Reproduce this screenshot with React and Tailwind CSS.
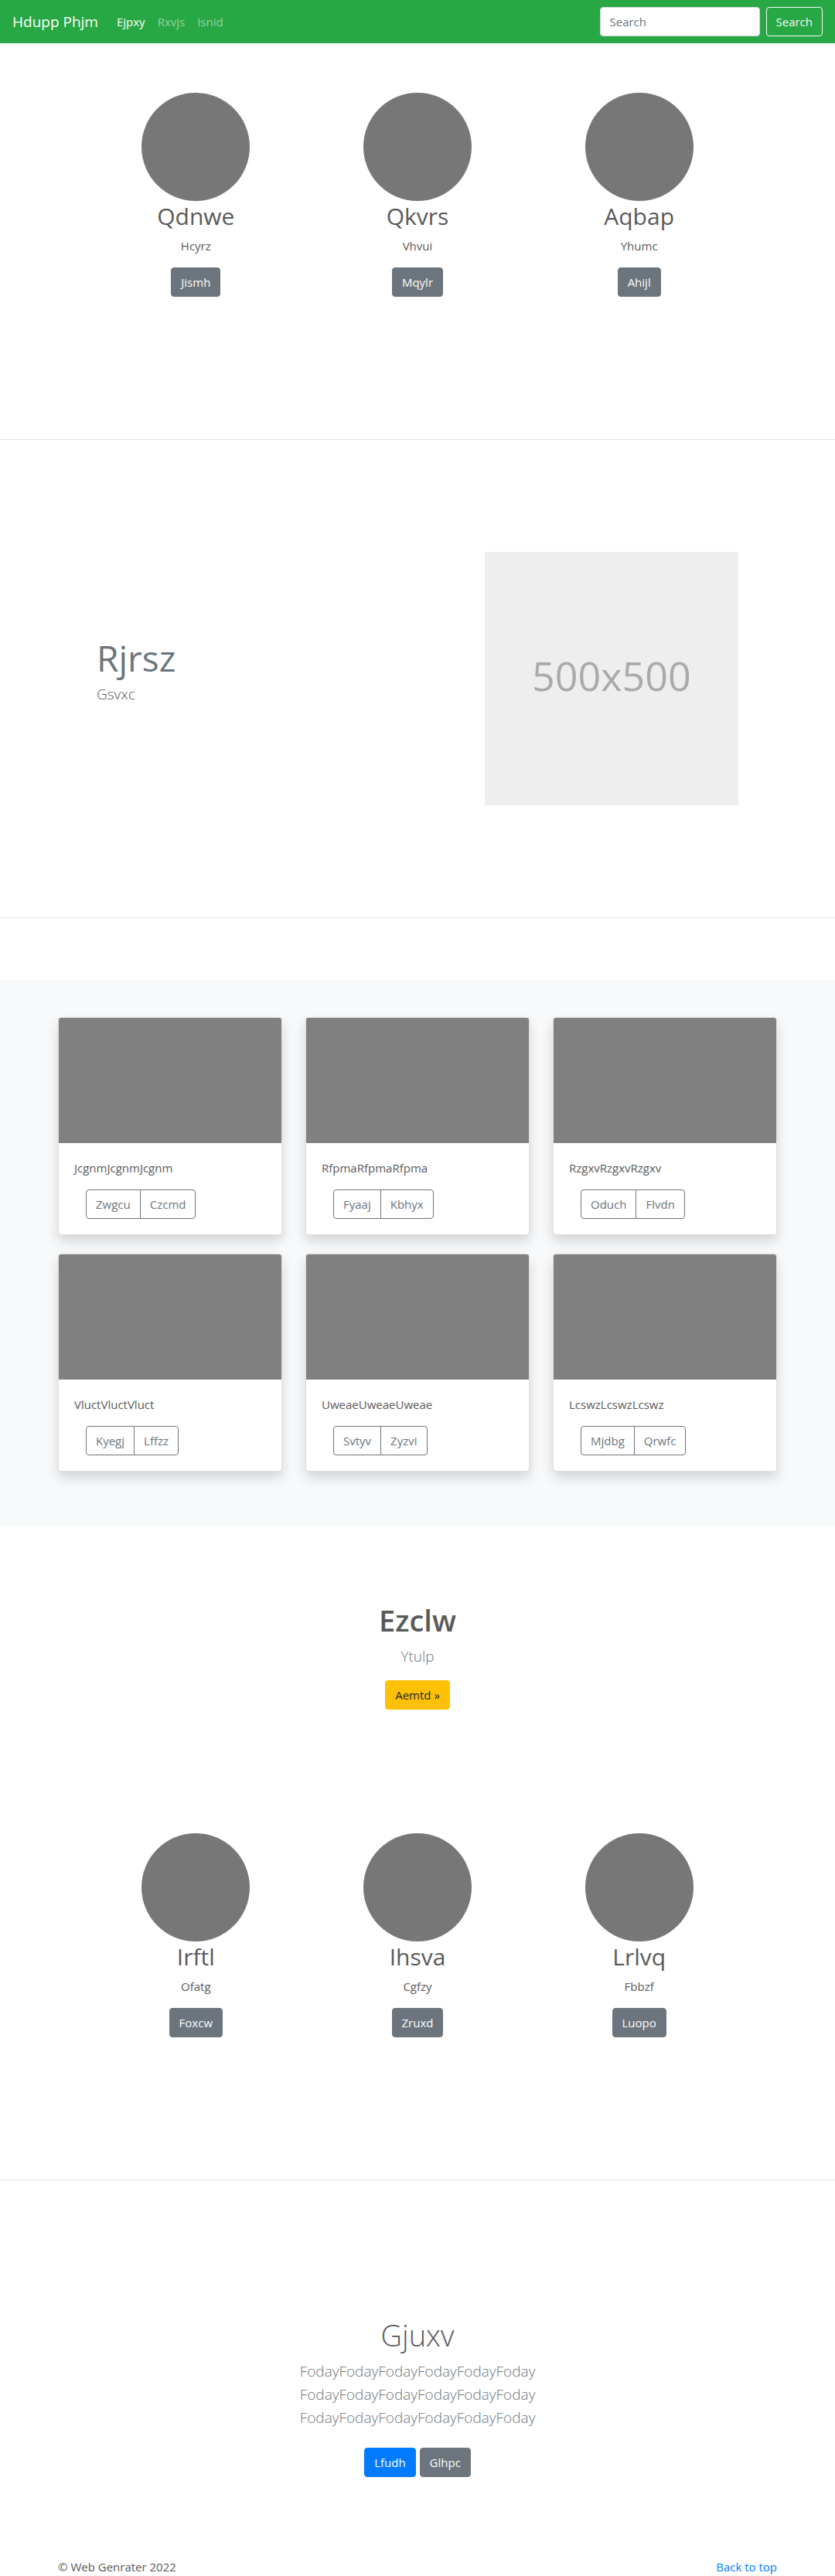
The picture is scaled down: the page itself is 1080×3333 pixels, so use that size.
const BTN = "inline-block rounded border px-3 h-[38px] leading-9 text-[15px] cursor-pointer";
const GRAY = "border-[#6c757d] bg-[#6c757d] text-white";

function Feature({ title, text, action }) {
  return (
    <div className="flex flex-col items-center text-center">
      <div className="size-[140px] rounded-full bg-[#777]" />
      <h2 className="mb-1.5 text-[30px] leading-10">{title}</h2>
      <p className="mb-4 leading-6">{text}</p>
      <button type="button" className={`${BTN} ${GRAY}`}>{action}</button>
    </div>
  );
}

function Features({ items }) {
  return (
    <section className="mx-auto grid max-w-[960px] grid-cols-3 px-[50px]">
      {items.map((f) => (
        <Feature key={f[0]} title={f[0]} text={f[1]} action={f[2]} />
      ))}
    </section>
  );
}

function Card({ text, left, right }) {
  return (
    <article className="rounded border border-black/12 bg-white shadow-[0_8px_16px_rgba(0,0,0,0.15)]">
      <div className="h-[162px] rounded-t-[3px] bg-[#808080]" />
      <div className="p-5">
        <p className="mb-4 leading-6">{text}</p>
        <div className="flex pl-[15px]">
          <button type="button" className="h-[38px] cursor-pointer rounded-l border border-[#6c757d] px-3 text-[15px] text-[#6c757d]">{left}</button>
          <button type="button" className="-ml-px h-[38px] cursor-pointer rounded-r border border-[#6c757d] px-3 text-[15px] text-[#6c757d]">{right}</button>
        </div>
      </div>
    </article>
  );
}

const TOP = [["Qdnwe", "Hcyrz", "Jismh"], ["Qkvrs", "Vhvui", "Mqylr"], ["Aqbap", "Yhumc", "Ahijl"]];
const BOTTOM = [["Irftl", "Ofatg", "Foxcw"], ["Ihsva", "Cgfzy", "Zruxd"], ["Lrlvq", "Fbbzf", "Luopo"]];
const CARDS = [
  ["JcgnmJcgnmJcgnm", "Zwgcu", "Czcmd"],
  ["RfpmaRfpmaRfpma", "Fyaaj", "Kbhyx"],
  ["RzgxvRzgxvRzgxv", "Oduch", "Flvdn"],
  ["VluctVluctVluct", "Kyegj", "Lffzz"],
  ["UweaeUweaeUweae", "Svtyv", "Zyzvi"],
  ["LcswzLcswzLcswz", "Mjdbg", "Qrwfc"],
];

export default function App() {
  return (
    <div className="bg-white font-['Open_Sans','Noto_Sans',sans-serif] text-[15px] text-[#5a5a5a]">
      <header className="flex h-14 items-center bg-[#28a745] px-4">
        <a href="#" className="mr-4 text-[19px] text-white">Hdupp Phjm</a>
        <nav className="flex flex-1">
          <a href="#" className="px-2 text-white">Ejpxy</a>
          <a href="#" className="px-2 text-white/50">Rxvjs</a>
          <a href="#" className="px-2 text-white/50">Isnid</a>
        </nav>
        <form className="flex gap-2" onSubmit={(e) => e.preventDefault()}>
          <input type="search" placeholder="Search" aria-label="Search" className="h-[38px] w-[207px] rounded border border-[#ced4da] bg-white px-3 text-[15px] text-[#495057] placeholder:text-[#6c757d]" />
          <button type="submit" className={`${BTN} border-[#f8f9fa] text-[#f8f9fa]`}>Search</button>
        </form>
      </header>

      <main>
        <div className="pt-16">
          <Features items={TOP} />
        </div>

        <hr className="mt-[184px] border-black/10" />

        <section className="mx-auto my-36 grid max-w-[960px] grid-cols-[7fr_5fr] items-center px-[50px] py-px">
          <div className="px-[15px] pb-6">
            <h2 className="text-[46px] leading-[64px] text-[#6c757d]">Rjrsz</h2>
            <p className="text-[19px] leading-[30px] font-light">Gsvxc</p>
          </div>
          <div className="mx-[15px] flex aspect-square items-center justify-center bg-[#eee] pb-2 text-[52px] text-[#aaa]">500x500</div>
        </section>

        <hr className="border-black/10" />

        <section className="mt-20 bg-[#f8f9fa] pt-12 pb-[72px]">
          <div className="mx-auto grid max-w-[960px] grid-cols-3 gap-x-[30px] gap-y-6 px-[15px]">
            {CARDS.map((c) => (
              <Card key={c[0]} text={c[0]} left={c[1]} right={c[2]} />
            ))}
          </div>
        </section>

        <section className="flex flex-col items-center pt-24 pb-40 text-center">
          <h1 className="mb-2 text-[38px] leading-[48px] font-semibold">Ezclw</h1>
          <p className="mb-4 text-[19px] leading-[30px] font-light text-[#6c757d]">Ytulp</p>
          <button type="button" className={`${BTN} border-[#ffc107] bg-[#ffc107] text-[#212529]`}>Aemtd »</button>
        </section>

        <Features items={BOTTOM} />

        <hr className="mt-[184px] border-black/10" />

        <section className="mx-auto mt-44 max-w-[640px] text-center">
          <h1 className="mb-2 text-[38px] leading-[48px] font-light">Gjuxv</h1>
          <p className="text-[19px] leading-[30px] font-light text-[#6c757d]">
            FodayFodayFodayFodayFodayFoday<br />FodayFodayFodayFodayFodayFoday<br />FodayFodayFodayFodayFodayFoday
          </p>
          <div className="mt-6 flex justify-center gap-[5px]">
            <button type="button" className={`${BTN} border-[#007bff] bg-[#007bff] text-white`}>Lfudh</button>
            <button type="button" className={`${BTN} ${GRAY}`}>Glhpc</button>
          </div>
        </section>
      </main>

      <footer className="mx-auto mt-[104px] flex max-w-[960px] justify-between px-[15px] leading-6">
        <p>© Web Genrater 2022</p>
        <a href="#" className="text-[#007bff]">Back to top</a>
      </footer>
    </div>
  );
}
